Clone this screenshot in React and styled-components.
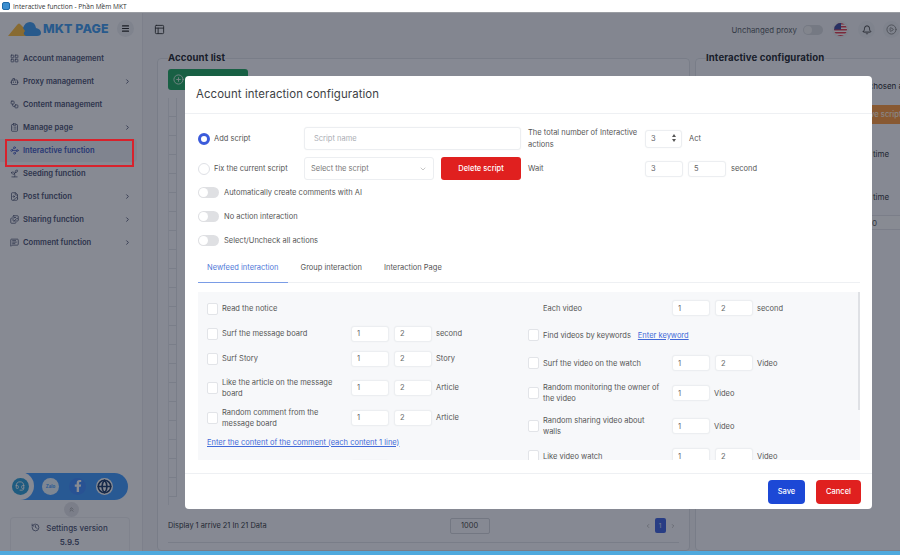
import React from "react";
import styled, { createGlobalStyle } from "styled-components";
import {
  LayoutGrid, Bot, Workflow, ClipboardList, Waypoints, Sprout, FileImage, Images,
  MessageSquareText, ChevronRight, ChevronLeft, ChevronDown, Menu, PanelsTopLeft, Bell,
  CirclePlay, CirclePlus, Headset, Globe, ChevronsUp, History,
} from "lucide-react";
import { FaFacebookF } from "react-icons/fa";

const Global = createGlobalStyle`
  html, body { margin: 0; padding: 0; background: #fff; }
  body { font-family: Inter, "Noto Sans", sans-serif; overflow: hidden; }
  * { box-sizing: border-box; }
`;

const Page = styled.div`
  width: 900px; height: 555px; display: flex; flex-direction: column; position: relative; overflow: hidden;
`;
const TitleBar = styled.div`
  height: 13px; background: #fff; border-bottom: 1px solid #9a9da3; display: flex; align-items: center;
  gap: 3px; padding-left: 2px; font: 6.6px "Open Sans", sans-serif; color: #333;
`;
const AppGlyph = styled.span`
  width: 8px; height: 8px; border-radius: 2px; background: #3d8fd0; border: 1px solid #1e6aa8; display: block;
`;
const Body = styled.div`
  flex: 1; display: flex; min-height: 0;
`;
const StatusBar = styled.div`
  height: 4px; background: #4fa9dd;
`;

const Sidebar = styled.aside`
  width: 143px; background: #fcfcff; border-right: 1px solid #e8e9ee; display: flex; flex-direction: column; flex: none;
`;
const LogoRow = styled.div`
  height: 34px; display: flex; align-items: center; padding: 0 8px 3px 8px; gap: 1px;
`;
const LogoText = styled.span`
  font: 800 12.4px Inter, sans-serif; color: #3f9cf0; letter-spacing: 0.1px; white-space: nowrap;
`;
const RoundBtn = styled.button`
  width: ${p => p.$size || 17}px; height: ${p => p.$size || 17}px; border-radius: 50%; border: 0; padding: 0;
  background: ${p => p.$bg || "#eceef2"}; color: ${p => p.$fg || "#222"};
  display: flex; align-items: center; justify-content: center; flex: none; margin-left: ${p => p.$ml || 0}px;
`;
const MenuList = styled.nav`
  display: flex; flex-direction: column;
`;
const MenuItem = styled.div`
  height: 23px; display: flex; align-items: center; gap: 4px; padding: 0 6px 0 10px; margin: 0 5px 0 0;
  font: 600 7.6px Inter, sans-serif; color: ${p => p.$active ? "#4058c0" : "#4a5170"};
  background: ${p => p.$active ? "#eef0f7" : "transparent"}; position: relative; white-space: nowrap;
  border-radius: 0 4px 4px 0;
  ${p => p.$active && `
    &::after { content: ""; position: absolute; left: 5px; top: 0; width: 125px; height: 24px;
      border: 2px solid #d8222c; z-index: 20; }
  `}
`;
const MenuLabel = styled.span`
  flex: 1;
`;
const SideBottom = styled.div`
  margin-top: auto; display: flex; flex-direction: column; align-items: center;
`;
const PillRow = styled.div`
  display: flex; align-items: center; width: 122px; margin-left: 0; margin-right: 8px;
`;
const SupportRing = styled.div`
  width: 28px; height: 28px; border-radius: 50%; background: #fcfcff; display: flex; align-items: center; justify-content: center;
  position: relative; z-index: 1; flex: none; color: #fff;
`;
const SupportDot = styled.div`
  width: 17px; height: 17px; border-radius: 50%; background: #2a9fd8; display: flex; align-items: center; justify-content: center;
`;
const Pill = styled.div`
  flex: 1; height: 27px; margin-left: -14px; border-radius: 0 14px 14px 0; background: #3f9aff;
  display: flex; align-items: center; padding-left: 22px; gap: 10px;
`;
const PillIcon = styled.div`
  width: 17px; height: 17px; border-radius: 50%; background: ${p => p.$bg}; color: ${p => p.$fg};
  display: flex; align-items: center; justify-content: center; font: 700 4.5px Inter, sans-serif; flex: none;
`;
const UpBtn = styled.div`
  width: 15px; height: 15px; border-radius: 50%; background: #e4e5ea; color: #777; margin-top: 2px;
  display: flex; align-items: center; justify-content: center;
`;
const VersionBox = styled.div`
  width: 120px; height: 34px; border: 1px solid #eeeff3; border-bottom: 0; border-radius: 4px 4px 0 0; margin-top: 0;
  display: flex; flex-direction: column; align-items: center; justify-content: center; gap: 4px; margin-right: 3px;
  font: 500 8px Inter, sans-serif; color: #4a5170;
`;
const VersionLine = styled.div`
  display: flex; align-items: center; gap: 6px; font-weight: ${p => p.$bold ? 600 : 500};
`;

const Main = styled.main`
  flex: 1; background: #f4f5f8; display: flex; flex-direction: column; min-width: 0;
`;
const Topbar = styled.header`
  height: 39px; display: flex; align-items: center; padding: 0 0 6px 11px; color: #333;
`;
const ProxyLabel = styled.span`
  margin-left: auto; font: 400 7.8px Inter, sans-serif; color: #5a5e66; white-space: nowrap;
`;
const SmallToggle = styled.span`
  width: 20px; height: 10px; border-radius: 6px; background: #d8dade; margin: 0 9px 0 6px; display: block; position: relative;
  &::after { content: ""; position: absolute; left: 1px; top: 1px; width: 8px; height: 8px; border-radius: 50%; background: #f2f2f2; }
`;
const Panels = styled.div`
  flex: 1; display: flex; gap: 5px; padding: 0 0 0 14px; min-height: 0;
`;
const Panel = styled.fieldset`
  margin: 0; min-width: 0; border: 1px solid #e0e2e8; border-radius: 4px; background: #fbfbfe;
  width: ${p => p.$w}px; flex: none; padding: 0 10px 0 10px; overflow: hidden; display: flex; flex-direction: column;
`;
const Legend = styled.legend`
  font: 700 9.6px Inter, sans-serif; color: #22252c; padding: 0; margin-left: 0; letter-spacing: 0.1px; line-height: 12px;
  white-space: nowrap;
`;
const GreenBtn = styled.div`
  width: 80px; height: 21px; border-radius: 3px; background: #1fa860; color: #d8f5e4; flex: none; margin-top: 5px;
  display: flex; align-items: center; padding-left: 5px;
`;
const Table = styled.div`
  flex: 1; margin-top: 8px; display: flex; flex-direction: column; overflow: hidden; border-left: 1px solid #e6e8ee;
`;
const TableRow = styled.div`
  height: 19px; flex: none; border-bottom: 1px solid #e3e5eb; border-right: 1px solid #e3e5eb; width: 8px;
`;
const TableFoot = styled.div`
  height: 34px; flex: none; border-bottom: 1px solid #e0e2e8; margin-bottom: 7px; display: flex; align-items: center;
  font: 400 7.4px Inter, sans-serif; color: #33363d; white-space: nowrap; margin-top: 4px;
`;
const PageSize = styled.div`
  width: 40px; height: 16px; margin-left: 183px; border: 1px solid #d4d6dc; border-radius: 2px; display: flex;
  align-items: center; justify-content: center; color: #444;
`;
const Pager = styled.div`
  margin-left: 155px; display: flex; align-items: center; gap: 4px; color: #888;
`;
const PageNum = styled.div`
  width: 11px; height: 15px; background: ${p => p.$on ? "#3f63e0" : "#f0f1f4"}; color: ${p => p.$on ? "#dfe6ff" : "#888"};
  border-radius: 2px; display: flex; align-items: center; justify-content: center; font-size: 6.5px;
`;
const ChosenLine = styled.div`
  margin: 17px 0 0 120px; font: 400 8px Inter, sans-serif; color: #22252c; white-space: nowrap;
`;
const OrangeBtn = styled.div`
  margin: 14px -40px 0 0; height: 19px; flex: none; background: #ff9a3c; border-radius: 3px; color: #fff3e0;
  font: 500 7.6px Inter, sans-serif; display: flex; align-items: center; padding-left: 155px; white-space: nowrap;
`;
const TimeLabel = styled.div`
  margin: ${p => p.$mt}px 0 0 167px; font: 400 8px Inter, sans-serif; color: #33363d;
`;
const TimeValue = styled.div`
  margin: 13px -30px 0 160px; height: 15px; flex: none; background: #fff; border: 1px solid #e4e5ea; border-radius: 2px;
  font: 400 8px Inter, sans-serif; color: #555; padding: 2px 0 0 5px;
`;

const Overlay = styled.div`
  position: absolute; left: 0; right: 0; top: 13px; bottom: 4px; background: rgba(17, 24, 39, 0.5); z-index: 10;
`;
const Modal = styled.section`
  position: absolute; left: 185px; top: 63px; width: 687px; height: 433px; background: #fff; border-radius: 4px;
  display: flex; flex-direction: column; color: #555; font: 400 7.5px Inter, sans-serif;
`;
const ModalHeader = styled.h2`
  margin: 0; height: 38px; flex: none; border-bottom: 1px solid #eef0f3; display: flex; align-items: center;
  padding: 0 11px 1px; font: 400 11.4px Inter, sans-serif; color: #3d3f45; letter-spacing: 0.1px;
`;
const ModalBody = styled.div`
  flex: 1; padding: 13px 12px 0 13px; display: flex; flex-direction: column; min-height: 0;
`;
const FormGrid = styled.div`
  display: grid; grid-template-columns: 106px 217px 124px 1fr; grid-auto-rows: 23px; row-gap: 7px; align-items: center;
`;
const RadioLabel = styled.label`
  display: flex; align-items: center; gap: 4px; white-space: nowrap;
`;
const Radio = styled.span`
  width: 12px; height: 12px; border-radius: 50%; flex: none; background: #fff;
  border: ${p => p.$on ? "3.5px solid #3b5bdb" : "1px solid #dfe1e6"};
`;
const TextField = styled.input`
  width: ${p => p.$w ? p.$w + "px" : "100%"}; height: ${p => p.$h || 23}px; border: 1px solid #eceef1; border-radius: 3px;
  background: #fff; font: 400 7.5px Inter, sans-serif; color: #666; outline: 0; padding: 0 0 0 ${p => p.$pl || 9}px; flex: none;
  box-shadow: 0 0 2px rgba(0,0,0,0.04);
  &::placeholder { color: #aaadb3; }
`;
const FieldLabel = styled.div`
  padding-left: 7px; line-height: 11.5px; padding-right: 2px;
`;
const InputGroup = styled.div`
  display: flex; align-items: center; gap: 5px;
`;
const InlineRow = styled.div`
  display: flex; align-items: center; gap: 7px;
`;
const SelectBox = styled.div`
  width: 130px; height: 23px; border: 1px solid #eceef1; border-radius: 3px; display: flex; align-items: center;
  justify-content: space-between; padding: 0 6px; color: #777; flex: none;
`;
const DeleteBtn = styled.button`
  width: 80px; height: 23px; border: 0; border-radius: 3px; background: #e0201f; color: #fff; padding: 0;
  font: 500 7.5px Inter, sans-serif;
`;
const SpinWrap = styled.div`
  position: relative; width: 37px; flex: none;
`;
const Spinner = styled.span`
  position: absolute; right: 6px; top: 4px; display: flex; flex-direction: column; gap: 2px;
  &::before, &::after { content: ""; display: block; border-left: 2px solid transparent; border-right: 2px solid transparent; }
  &::before { border-bottom: 3px solid #555; }
  &::after { border-top: 3px solid #555; }
`;
const ToggleRow = styled.label`
  height: 24px; display: flex; align-items: center; gap: 5px;
`;
const Toggle = styled.span`
  width: 21px; height: 11px; border-radius: 6px; background: #dfe0e3; display: block; position: relative; flex: none;
  &::after { content: ""; position: absolute; left: 1px; top: 1px; width: 9px; height: 9px; border-radius: 50%; background: #fff; }
`;
const Tabs = styled.div`
  height: 31px; flex: none; display: flex; gap: 4px; border-bottom: 1px solid #eef0f3;
`;
const Tab = styled.div`
  padding: 0 9px; height: 31px; display: flex; align-items: center; padding-top: 0; white-space: nowrap;
  color: ${p => p.$on ? "#4f78d8" : "#555"};
  border-bottom: 1.5px solid ${p => p.$on ? "#7a9ce6" : "transparent"};
`;
const ActionPanel = styled.div`
  margin-top: 9px; height: 168px; width: 662px; flex: none; background: #f7f8fa; position: relative; overflow: hidden;
  display: grid; grid-template-columns: 330px 1fr; padding-top: 4px;
`;
const ScrollThumb = styled.div`
  position: absolute; right: 0; top: 0; width: 2px; height: 118px; background: #dfe1e5;
`;
const Col = styled.div`
  display: flex; flex-direction: column; padding-left: ${p => p.$pl}px;
`;
const ActionRow = styled.div`
  height: ${p => p.$h}px; flex: none; display: flex; align-items: center;
`;
const Check = styled.span`
  width: 11px; height: 12px; flex: none; border: 1px solid #e2e4e8; border-radius: 2px; background: #fff; margin-right: 4px;
  visibility: ${p => p.$hidden ? "hidden" : "visible"};
`;
const ActionLabel = styled.div`
  width: 129px; flex: none; line-height: 11px; white-space: nowrap;
`;
const Unit = styled.span`
  margin-left: 4px;
`;
const LinkText = styled.a`
  color: #4169d8; text-decoration: underline; white-space: nowrap; margin-left: ${p => p.$ml || 0}px;
`;
const ModalFooter = styled.footer`
  margin-top: auto; height: 36px; flex: none; border-top: 1px solid #eef0f3; display: flex; align-items: center;
  justify-content: flex-end; gap: 11px; padding: 0 11px;
`;
const FootBtn = styled.button`
  height: 24px; width: ${p => p.$w}px; border: 0; border-radius: 4px; background: ${p => p.$bg}; color: #fff; padding: 0;
  font: 500 7.5px Inter, sans-serif;
`;

const menu = [
  [LayoutGrid, "Account management"],
  [Bot, "Proxy management", true],
  [Workflow, "Content management"],
  [ClipboardList, "Manage page", true],
  [Waypoints, "Interactive function", false, true],
  [Sprout, "Seeding function"],
  [FileImage, "Post function", true],
  [Images, "Sharing function", true],
  [MessageSquareText, "Comment function", true],
];

const leftRows = [
  { h: 25, label: "Read the notice" },
  { h: 25, label: "Surf the message board", vals: [1, 2], unit: "second" },
  { h: 25, label: "Surf Story", vals: [1, 2], unit: "Story" },
  { h: 33, label: ["Like the article on the message", "board"], vals: [1, 2], unit: "Article" },
  { h: 27, label: ["Random comment from the", "message board"], vals: [1, 2], unit: "Article" },
  { h: 22, link: "Enter the content of the comment (each content 1 line)" },
  { h: 30, label: "", hideCheck: true, vals: [1], unit: "" },
];
const rightRows = [
  { h: 24, label: "Each video", hideCheck: true, vals: [1, 2], unit: "second" },
  { h: 30, label: "Find videos by keywords", inlineLink: "Enter keyword" },
  { h: 26, label: "Surf the video on the watch", vals: [1, 2], unit: "Video" },
  { h: 34, label: ["Random monitoring the owner of", "the video"], vals: [1], unit: "Video" },
  { h: 32, label: ["Random sharing video about", "walls"], vals: [1], unit: "Video" },
  { h: 28, label: "Like video watch", vals: [1, 2], unit: "Video" },
];

function Action({ row }) {
  if (row.link) {
    return <ActionRow $h={row.h}><LinkText>{row.link}</LinkText></ActionRow>;
  }
  const lines = Array.isArray(row.label) ? row.label : [row.label];
  return (
    <ActionRow $h={row.h}>
      <Check $hidden={row.hideCheck} />
      {row.inlineLink ? (
        <>
          <span style={{ whiteSpace: "nowrap" }}>{row.label}</span>
          <LinkText $ml={7}>{row.inlineLink}</LinkText>
        </>
      ) : (
        <ActionLabel>{lines.map(l => <div key={l}>{l}</div>)}</ActionLabel>
      )}
      {row.vals && (
        <InputGroup>
          {row.vals.map((v, i) => <TextField key={i} $w={38} $h={16} $pl={5} defaultValue={v} readOnly />)}
        </InputGroup>
      )}
      {row.unit && <Unit>{row.unit}</Unit>}
    </ActionRow>
  );
}

export default function App() {
  return (
    <Page>
      <Global />
      <TitleBar><AppGlyph />Interactive function - Phần Mềm MKT</TitleBar>
      <Body>
        <Sidebar>
          <LogoRow>
            <svg width="34" height="17" viewBox="0 0 34 17">
              <path d="M0 16 L9 5 Q11 2 13 5 L20 12 L22 16 Z" fill="#ffbe3c" />
              <path d="M15 8 Q17 2 22 2 Q27 2 28 8 Q33 9 33 13 Q33 16 29 16 L18 16 Q14 14 17 11 Z" fill="#3f9cf0" />
            </svg>
            <LogoText>MKT PAGE</LogoText>
            <RoundBtn $ml={7}><Menu size={9} strokeWidth={3} /></RoundBtn>
          </LogoRow>
          <MenuList>
            {menu.map(([Icon, label, chev, active]) => (
              <MenuItem key={label} $active={active}>
                <Icon size={9} strokeWidth={2} />
                <MenuLabel>{label}</MenuLabel>
                {chev && <ChevronRight size={7} strokeWidth={3} />}
              </MenuItem>
            ))}
          </MenuList>
          <SideBottom>
            <PillRow>
              <SupportRing><SupportDot><Headset size={10} /></SupportDot></SupportRing>
              <Pill>
                <PillIcon $bg="#eaf6ff" $fg="#3f9aff">Zalo</PillIcon>
                <PillIcon $bg="#3f8cff" $fg="#fff"><FaFacebookF size={12} /></PillIcon>
                <PillIcon $bg="#fff" $fg="#1a3a6a"><Globe size={15} strokeWidth={2.6} /></PillIcon>
              </Pill>
            </PillRow>
            <UpBtn><ChevronsUp size={7} /></UpBtn>
            <VersionBox>
              <VersionLine><History size={9} />Settings version</VersionLine>
              <VersionLine $bold>5.9.5</VersionLine>
            </VersionBox>
          </SideBottom>
        </Sidebar>
        <Main>
          <Topbar>
            <PanelsTopLeft size={11} strokeWidth={2} />
            <ProxyLabel>Unchanged proxy</ProxyLabel>
            <SmallToggle />
            <svg width="17" height="17" viewBox="0 0 17 17">
              <defs><clipPath id="flag"><circle cx="8.5" cy="8.5" r="6.5" /></clipPath></defs>
              <circle cx="8.5" cy="8.5" r="8.5" fill="#eceef2" />
              <g clipPath="url(#flag)">
                <rect x="2" y="2" width="13" height="13" fill="#fff" />
                {[2, 5, 8, 11, 14].map(y => <rect key={y} x="2" y={y} width="13" height="1.5" fill="#e23b4e" />)}
                <rect x="2" y="2" width="7" height="6.5" fill="#3c4a9e" />
              </g>
            </svg>
            <RoundBtn $ml={9}><Bell size={10} strokeWidth={2} /></RoundBtn>
            <RoundBtn $ml={8} $fg="#888"><CirclePlay size={11} /></RoundBtn>
          </Topbar>
          <Panels>
            <Panel $w={533}>
              <Legend>Account list</Legend>
              <GreenBtn><CirclePlus size={11} /></GreenBtn>
              <Table>
                {Array.from({ length: 21 }, (_, i) => <TableRow key={i} />)}
              </Table>
              <TableFoot>
                Display 1 arrive 21 In 21 Data
                <PageSize>1000</PageSize>
                <Pager>
                  <ChevronLeft size={6} />
                  <PageNum $on>1</PageNum>
                  <ChevronRight size={6} />
                </Pager>
              </TableFoot>
            </Panel>
            <Panel $w={240}>
              <Legend>Interactive configuration</Legend>
              <ChosenLine>Number of chosen accounts</ChosenLine>
              <OrangeBtn>Save script</OrangeBtn>
              <TimeLabel $mt={25}>time</TimeLabel>
              <TimeLabel $mt={33}>time</TimeLabel>
              <TimeValue>0</TimeValue>
            </Panel>
          </Panels>
        </Main>
      </Body>
      <StatusBar />
      <Overlay>
        <Modal>
          <ModalHeader>Account interaction configuration</ModalHeader>
          <ModalBody>
            <FormGrid>
              <RadioLabel><Radio $on />Add script</RadioLabel>
              <TextField placeholder="Script name" readOnly />
              <FieldLabel>The total number of Interactive actions</FieldLabel>
              <InlineRow>
                <SpinWrap>
                  <TextField $w={37} $h={18} $pl={5} defaultValue="3" readOnly />
                  <Spinner />
                </SpinWrap>
                <span>Act</span>
              </InlineRow>
              <RadioLabel><Radio />Fix the current script</RadioLabel>
              <InlineRow>
                <SelectBox>Select the script<ChevronDown size={8} color="#aaa" /></SelectBox>
                <DeleteBtn>Delete script</DeleteBtn>
              </InlineRow>
              <FieldLabel>Wait</FieldLabel>
              <InputGroup>
                <TextField $w={38} $h={16} $pl={5} defaultValue="3" readOnly />
                <TextField $w={38} $h={16} $pl={5} defaultValue="5" readOnly />
                <span>second</span>
              </InputGroup>
            </FormGrid>
            <div>
              <ToggleRow><Toggle />Automatically create comments with AI</ToggleRow>
              <ToggleRow><Toggle />No action interaction</ToggleRow>
              <ToggleRow><Toggle />Select/Uncheck all actions</ToggleRow>
            </div>
            <Tabs>
              <Tab $on>Newfeed interaction</Tab>
              <Tab>Group interaction</Tab>
              <Tab>Interaction Page</Tab>
            </Tabs>
            <ActionPanel>
              <Col $pl={9}>{leftRows.map((r, i) => <Action key={i} row={r} />)}</Col>
              <Col $pl={0}>{rightRows.map((r, i) => <Action key={i} row={r} />)}</Col>
              <ScrollThumb />
            </ActionPanel>
          </ModalBody>
          <ModalFooter>
            <FootBtn $w={37} $bg="#1c48d6">Save</FootBtn>
            <FootBtn $w={45} $bg="#e0201f">Cancel</FootBtn>
          </ModalFooter>
        </Modal>
      </Overlay>
    </Page>
  );
}
